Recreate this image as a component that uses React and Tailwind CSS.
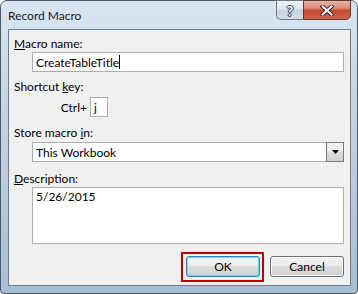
import React from 'react';

const btn =
  'w-[74px] h-[21px] rounded-[3px] border flex items-center justify-center bg-[linear-gradient(to_bottom,#f2f2f2_0%,#ebebeb_50%,#dddddd_50%,#cfcfcf_100%)]';

const Label = ({ className = '', children }) => (
  <div className={`h-[15px] whitespace-nowrap ${className}`}>{children}</div>
);

export default function App() {
  return (
    <div className="w-[358px] h-[294px] bg-white font-['Lato',sans-serif] text-[12px] leading-[15px] text-black">
      <div className="flex flex-col w-full h-full rounded-t-[7px] rounded-b-[4px] border border-[#4c5a68] bg-[linear-gradient(to_bottom,#dae6f2_0%,#c7d7e6_30%,#a9bed2_100%)] pl-[7px] pr-[6px] pb-[7px]">
        {/* Title bar */}
        <div className="h-[28px] flex items-start justify-between">
          <span className="mt-[7px] text-[#1b1b1b]">Record Macro</span>
          <div className="flex -mt-px">
            <div className="w-[27px] h-[20px] rounded-bl-[5px] border border-[#6b7a89] border-r-0 bg-[linear-gradient(to_bottom,#eef2f7_0%,#dde5ee_45%,#c7d3e0_50%,#d3dde8_100%)] flex items-center justify-center font-bold text-[14px] text-white [text-shadow:0_0_1px_#3a4756,1px_0_0_#3a4756,-1px_0_0_#3a4756,0_1px_0_#3a4756,0_-1px_0_#3a4756]">
              ?
            </div>
            <div className="w-[48px] h-[20px] rounded-br-[5px] border border-[#5a3a34] bg-[linear-gradient(to_bottom,#eab3a6_0%,#dc8d79_40%,#c7492f_52%,#d2634a_100%)] flex items-center justify-center">
              <svg width="14" height="11" viewBox="0 0 14 11">
                <path d="M2.5 1.5 L11.5 9.5 M11.5 1.5 L2.5 9.5" stroke="#3b2a28" strokeWidth="4" strokeLinecap="square" />
                <path d="M2.5 1.5 L11.5 9.5 M11.5 1.5 L2.5 9.5" stroke="#ffffff" strokeWidth="2" strokeLinecap="square" />
              </svg>
            </div>
          </div>
        </div>

        {/* Client area */}
        <div className="flex-1 flex flex-col border border-[#6e7e8d] bg-[#f0f0f0] pt-[6px] pl-[5px] pr-[6px]">
          <Label>
            <u>M</u>acro name:
          </Label>
          <div className="ml-[18px] mt-px h-[20px] border border-[#abadb3] bg-white flex items-center pl-[3px]">
            CreateTableTitle
            <span className="w-px h-[14px] bg-black" />
          </div>

          <Label className="mt-[7px]">
            Shortcut <u>k</u>ey:
          </Label>
          <div className="mt-[3px] h-[20px] flex items-center">
            <span className="w-[73px] text-right">Ctrl+</span>
            <div className="ml-[3px] w-[18px] h-[20px] border border-[#abadb3] bg-white flex items-center pl-[3px]">
              j
            </div>
          </div>

          <Label className="mt-[8px]">
            Store macro <u>i</u>n:
          </Label>
          <div className="ml-[18px] mt-[2px] h-[20px] border border-[#abadb3] bg-white flex items-center pl-[3px]">
            This Workbook
            <div className="ml-auto -mr-px w-[18px] h-[20px] border border-[#7a7a7a] bg-[linear-gradient(to_bottom,#f2f2f2_0%,#ebebeb_50%,#dddddd_50%,#cfcfcf_100%)] flex items-center justify-center">
              <svg width="7" height="4" viewBox="0 0 7 4">
                <path d="M0 0 H7 L3.5 4 Z" fill="#000" />
              </svg>
            </div>
          </div>

          <Label className="mt-[9px]">
            <u>D</u>escription:
          </Label>
          <div className="ml-[18px] mt-px h-[57px] border border-[#abadb3] bg-white pl-[3px] pt-[1px]">
            5/26/2015
          </div>

          <div className="mt-[12px] flex justify-end gap-[10px]">
            <div className="relative">
              <div className={`${btn} border-[#3c7fb1] shadow-[inset_0_0_0_1px_#6fd3f5]`}>OK</div>
              <div className="absolute -left-[5px] -right-[4px] -top-[4px] -bottom-[5px] border-2 border-[#c00000]" />
            </div>
            <div className={`${btn} border-[#707070] shadow-[inset_0_0_0_1px_#fafafa]`}>Cancel</div>
          </div>
        </div>
      </div>
    </div>
  );
}
